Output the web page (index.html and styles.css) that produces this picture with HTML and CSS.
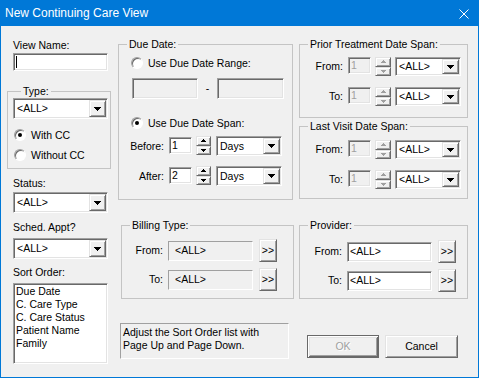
FILE: index.html
```html
<!DOCTYPE html>
<html lang="en">
<head>
    <meta charset="UTF-8">
    <title>New Continuing Care View</title>
    <link rel="stylesheet" href="styles.css">
</head>
<body>
<div class="window">
    <div class="titlebar">
        <span class="title">New Continuing Care View</span>
        <svg class="close" width="10" height="10" viewBox="0 0 10 10"><path d="M0.5 0.5L9.5 9.5M9.5 0.5L0.5 9.5" stroke="#fff" stroke-width="1"/></svg>
    </div>

    <div class="client">
        <!-- left column -->
        <div class="col col-left">
            <div class="label lbl-view">View Name:</div>
            <div class="sunken edit view-name"><span class="caret"></span></div>

            <fieldset class="group group-type">
                <legend>Type:</legend>
                <div class="sunken combo combo-wide">
                    <span class="combo-text">&lt;ALL&gt;</span>
                    <span class="raised drop"><svg width="7" height="4"><path d="M0 0h7v1H0zM1 1h5v1H1zM2 2h3v1H2zM3 3h1v1H3z"/></svg></span>
                </div>
                <div class="radio-row first"><span class="radio checked"></span>With CC</div>
                <div class="radio-row"><span class="radio"></span>Without CC</div>
            </fieldset>

            <div class="label lbl-status">Status:</div>
            <div class="sunken combo combo-wide combo-status">
                <span class="combo-text">&lt;ALL&gt;</span>
                <span class="raised drop"><svg width="7" height="4"><path d="M0 0h7v1H0zM1 1h5v1H1zM2 2h3v1H2zM3 3h1v1H3z"/></svg></span>
            </div>

            <div class="label lbl-sched">Sched. Appt?</div>
            <div class="sunken combo combo-wide combo-sched">
                <span class="combo-text">&lt;ALL&gt;</span>
                <span class="raised drop"><svg width="7" height="4"><path d="M0 0h7v1H0zM1 1h5v1H1zM2 2h3v1H2zM3 3h1v1H3z"/></svg></span>
            </div>

            <div class="label lbl-sort">Sort Order:</div>
            <div class="sunken listbox">
                <div>Due Date</div>
                <div>C. Care Type</div>
                <div>C. Care Status</div>
                <div>Patient Name</div>
                <div>Family</div>
            </div>
        </div>

        <!-- middle column -->
        <div class="col col-mid">
            <fieldset class="group group-due">
                <legend>Due Date:</legend>
                <div class="radio-row range-radio"><span class="radio"></span>Use Due Date Range:</div>
                <div class="range-row">
                    <div class="sunken edit disabled range-box"></div>
                    <span class="dash">-</span>
                    <div class="sunken edit disabled range-box second"></div>
                </div>
                <div class="radio-row span-radio"><span class="radio checked"></span>Use Due Date Span:</div>
                <div class="span-row before">
                    <span class="row-label">Before:</span>
                    <div class="sunken edit num">1</div>
                    <div class="spin">
                        <span class="raised spin-btn"><svg width="5" height="3"><path d="M2 0h1v1H2zM1 1h3v1H1zM0 2h5v1H0z"/></svg></span>
                        <span class="raised spin-btn"><svg width="5" height="3"><path d="M0 0h5v1H0zM1 1h3v1H1zM2 2h1v1H2z"/></svg></span>
                    </div>
                    <div class="sunken combo combo-days">
                        <span class="combo-text">Days</span>
                        <span class="raised drop"><svg width="7" height="4"><path d="M0 0h7v1H0zM1 1h5v1H1zM2 2h3v1H2zM3 3h1v1H3z"/></svg></span>
                    </div>
                </div>
                <div class="span-row after">
                    <span class="row-label">After:</span>
                    <div class="sunken edit num">2</div>
                    <div class="spin">
                        <span class="raised spin-btn"><svg width="5" height="3"><path d="M2 0h1v1H2zM1 1h3v1H1zM0 2h5v1H0z"/></svg></span>
                        <span class="raised spin-btn"><svg width="5" height="3"><path d="M0 0h5v1H0zM1 1h3v1H1zM2 2h1v1H2z"/></svg></span>
                    </div>
                    <div class="sunken combo combo-days">
                        <span class="combo-text">Days</span>
                        <span class="raised drop"><svg width="7" height="4"><path d="M0 0h7v1H0zM1 1h5v1H1zM2 2h3v1H2zM3 3h1v1H3z"/></svg></span>
                    </div>
                </div>
            </fieldset>

            <fieldset class="group group-billing">
                <legend>Billing Type:</legend>
                <div class="pick-row first">
                    <span class="row-label">From:</span>
                    <div class="static-box">&lt;ALL&gt;</div>
                    <div class="raised more">&gt;&gt;</div>
                </div>
                <div class="pick-row">
                    <span class="row-label">To:</span>
                    <div class="static-box">&lt;ALL&gt;</div>
                    <div class="raised more">&gt;&gt;</div>
                </div>
            </fieldset>

            <div class="note">Adjust the Sort Order list with<br>Page Up and Page Down.</div>
        </div>

        <!-- right column -->
        <div class="col col-right">
            <fieldset class="group group-prior">
                <legend>Prior Treatment Date Span:</legend>
                <div class="span-row first">
                    <span class="row-label">From:</span>
                    <div class="sunken edit num disabled">1</div>
                    <div class="spin off">
                        <span class="raised spin-btn"><svg width="5" height="3"><path d="M2 0h1v1H2zM1 1h3v1H1zM0 2h5v1H0z"/></svg></span>
                        <span class="raised spin-btn"><svg width="5" height="3"><path d="M0 0h5v1H0zM1 1h3v1H1zM2 2h1v1H2z"/></svg></span>
                    </div>
                    <div class="sunken combo combo-days">
                        <span class="combo-text">&lt;ALL&gt;</span>
                        <span class="raised drop"><svg width="7" height="4"><path d="M0 0h7v1H0zM1 1h5v1H1zM2 2h3v1H2zM3 3h1v1H3z"/></svg></span>
                    </div>
                </div>
                <div class="span-row second">
                    <span class="row-label">To:</span>
                    <div class="sunken edit num disabled">1</div>
                    <div class="spin off">
                        <span class="raised spin-btn"><svg width="5" height="3"><path d="M2 0h1v1H2zM1 1h3v1H1zM0 2h5v1H0z"/></svg></span>
                        <span class="raised spin-btn"><svg width="5" height="3"><path d="M0 0h5v1H0zM1 1h3v1H1zM2 2h1v1H2z"/></svg></span>
                    </div>
                    <div class="sunken combo combo-days">
                        <span class="combo-text">&lt;ALL&gt;</span>
                        <span class="raised drop"><svg width="7" height="4"><path d="M0 0h7v1H0zM1 1h5v1H1zM2 2h3v1H2zM3 3h1v1H3z"/></svg></span>
                    </div>
                </div>
            </fieldset>

            <fieldset class="group group-visit">
                <legend>Last Visit Date Span:</legend>
                <div class="span-row first">
                    <span class="row-label">From:</span>
                    <div class="sunken edit num disabled">1</div>
                    <div class="spin off">
                        <span class="raised spin-btn"><svg width="5" height="3"><path d="M2 0h1v1H2zM1 1h3v1H1zM0 2h5v1H0z"/></svg></span>
                        <span class="raised spin-btn"><svg width="5" height="3"><path d="M0 0h5v1H0zM1 1h3v1H1zM2 2h1v1H2z"/></svg></span>
                    </div>
                    <div class="sunken combo combo-days">
                        <span class="combo-text">&lt;ALL&gt;</span>
                        <span class="raised drop"><svg width="7" height="4"><path d="M0 0h7v1H0zM1 1h5v1H1zM2 2h3v1H2zM3 3h1v1H3z"/></svg></span>
                    </div>
                </div>
                <div class="span-row second">
                    <span class="row-label">To:</span>
                    <div class="sunken edit num disabled">1</div>
                    <div class="spin off">
                        <span class="raised spin-btn"><svg width="5" height="3"><path d="M2 0h1v1H2zM1 1h3v1H1zM0 2h5v1H0z"/></svg></span>
                        <span class="raised spin-btn"><svg width="5" height="3"><path d="M0 0h5v1H0zM1 1h3v1H1zM2 2h1v1H2z"/></svg></span>
                    </div>
                    <div class="sunken combo combo-days">
                        <span class="combo-text">&lt;ALL&gt;</span>
                        <span class="raised drop"><svg width="7" height="4"><path d="M0 0h7v1H0zM1 1h5v1H1zM2 2h3v1H2zM3 3h1v1H3z"/></svg></span>
                    </div>
                </div>
            </fieldset>

            <fieldset class="group group-provider">
                <legend>Provider:</legend>
                <div class="pick-row first">
                    <span class="row-label">From:</span>
                    <div class="sunken edit pick-edit">&lt;ALL&gt;</div>
                    <div class="raised more">&gt;&gt;</div>
                </div>
                <div class="pick-row">
                    <span class="row-label">To:</span>
                    <div class="sunken edit pick-edit">&lt;ALL&gt;</div>
                    <div class="raised more">&gt;&gt;</div>
                </div>
            </fieldset>

            <div class="buttons">
                <div class="raised button default disabled">OK</div>
                <div class="raised button">Cancel</div>
            </div>
        </div>
    </div>
</div>
</body>
</html>
```

FILE: styles.css
```css
body {
    margin: 0;
    font-family: "Liberation Sans", Arial, sans-serif;
    font-size: 10.5px;
    line-height: 13px;
    color: #000;
}
.window {
    width: 479px;
    height: 378px;
    box-sizing: border-box;
    border: 1px solid #0078d7;
    background: #f0f0f0;
    display: flex;
    flex-direction: column;
}
.titlebar {
    flex: none;
    height: 25px;
    background: #0078d7;
    color: #fff;
    font-size: 12px;
    display: flex;
    align-items: center;
    justify-content: space-between;
    padding: 0 9px 0 4px;
}
.client {
    flex: 1;
    display: flex;
    padding-left: 6px;
}
.col {
    display: flex;
    flex-direction: column;
    align-items: flex-start;
}
.col-left { width: 104px; }
.col-mid { width: 176px; margin-left: 7px; }
.col-right { width: 169px; margin-left: 5px; }

/* 3d borders */
.sunken {
    box-sizing: border-box;
    background: #fff;
    border: 1px solid;
    border-color: #a0a0a0 #fff #fff #a0a0a0;
    box-shadow: inset 1px 1px 0 #696969, inset -1px -1px 0 #e3e3e3;
    padding: 1px;
}
.raised {
    box-sizing: border-box;
    background: #f0f0f0;
    border: 1px solid;
    border-color: #e3e3e3 #696969 #696969 #e3e3e3;
    box-shadow: inset 1px 1px 0 #fff, inset -1px -1px 0 #a0a0a0;
}

/* left column */
.label { margin-left: 6px; }
.lbl-view { margin-top: 13px; }
.view-name {
    margin: 1px 0 0 6px;
    width: 95px;
    height: 18px;
    padding-left: 2px;
}
.caret {
    display: block;
    width: 1px;
    height: 12px;
    margin-top: 1px;
    background: #000;
}
.lbl-status { margin-top: 8px; }
.combo-status { margin: 2px 0 0 6px; }
.lbl-sched { margin-top: 8px; }
.combo-sched { margin: 4px 0 0 6px; }
.lbl-sort { margin-top: 7px; }
.listbox {
    margin: 4px 0 0 6px;
    width: 95px;
    height: 81px;
    padding: 1px 2px;
}

/* group boxes */
.group {
    margin: 0;
    padding: 0;
    min-width: 0;
    box-sizing: border-box;
    border: 1px solid #c4c4c4;
}
.group legend {
    padding: 0 2px;
    margin-left: 8px;
    line-height: 13px;
}
.group-type {
    margin-top: 14px;
    width: 104px;
    padding: 0 0 5px 5px;
}

/* combo box */
.combo {
    display: flex;
    height: 20px;
}
.combo-wide { width: 95px; height: 21px; }
.combo-text {
    flex: 1;
    padding-left: 2px;
    display: flex;
    align-items: center;
}
.drop {
    width: 17px;
    display: flex;
    align-items: center;
    justify-content: center;
}
.drop svg { fill: #000; }

/* radio */
.radio-row {
    display: flex;
    align-items: center;
    height: 16px;
    margin-top: 4px;
}
.radio-row.first { margin-top: 8px; }
.group-type .radio-row { margin-left: 1px; }
.radio {
    flex: none;
    width: 12px;
    height: 12px;
    box-sizing: border-box;
    border-radius: 50%;
    background: #fff;
    border: 1px solid;
    border-color: #a0a0a0 #fff #fff #a0a0a0;
    box-shadow: inset 1px 1px 0 #696969;
    margin-right: 5px;
    display: flex;
    align-items: center;
    justify-content: center;
}
.radio.checked::after {
    content: "";
    width: 4px;
    height: 4px;
    border-radius: 50%;
    background: #000;
}

/* due date */
.group-due {
    margin-top: 12px;
    width: 175px;
    padding-bottom: 13px;
}
.range-radio { margin: 4px 0 0 12px; }
.range-row {
    display: flex;
    align-items: center;
    margin: 7px 0 0 13px;
}
.edit.disabled { background: #f0f0f0; color: #a0a0a0; }
.range-box { width: 66px; height: 21px; }
.range-box.second { width: 67px; }
.dash { width: 19px; text-align: center; }
.span-radio { margin: 16px 0 0 12px; }

.span-row {
    display: flex;
    align-items: flex-start;
    height: 20px;
}
.span-row.before { margin-top: 5px; }
.span-row.after { margin-top: 10px; }
.row-label {
    align-self: center;
    text-align: right;
    width: 45px;
    margin-right: 5px;
}
.num {
    width: 23px;
    height: 17px;
    margin-top: 1px;
    padding: 1px 2px;
}
.spin {
    display: flex;
    flex-direction: column;
    width: 15px;
    height: 19px;
    margin-left: 4px;
}
.spin-btn {
    flex: 1;
    display: flex;
    align-items: center;
    justify-content: center;
}
.spin svg { fill: #000; }
.spin.off svg { fill: #a0a0a0; }
.combo-days {
    width: 66px;
    margin-left: 5px;
}

/* billing / provider */
.group-billing {
    margin: 19px 0 0 3px;
    width: 173px;
    padding-bottom: 7px;
}
.pick-row {
    display: flex;
    align-items: center;
    height: 23px;
    margin-top: 6px;
}
.pick-row.first { margin-top: 7px; }
.group-billing .row-label { width: 41px; }
.static-box {
    box-sizing: border-box;
    width: 85px;
    height: 20px;
    border: 1px solid;
    border-color: #a0a0a0 #fff #fff #a0a0a0;
    padding-left: 6px;
    display: flex;
    align-items: center;
}
.more {
    width: 18px;
    height: 23px;
    margin-left: 6px;
    display: flex;
    align-items: center;
    justify-content: center;
}
.note {
    margin: 24px 0 0 2px;
    box-sizing: border-box;
    width: 169px;
    height: 36px;
    border: 1px solid;
    border-color: #a0a0a0 #fff #fff #a0a0a0;
    padding: 2px 2px;
}

/* right column */
.group-prior,
.group-visit,
.group-provider {
    width: 169px;
}
.group-prior { margin-top: 12px; padding-bottom: 11px; }
.group-visit { margin-top: 2px; padding-bottom: 9px; }
.group-prior .span-row,
.group-visit .span-row { height: 19px; }
.group-prior .span-row.first { margin-top: 6px; }
.group-visit .span-row.first { margin-top: 7px; }
.group-prior .span-row.second,
.group-visit .span-row.second { margin-top: 11px; }
.group-prior .row-label,
.group-visit .row-label { width: 43px; }
.group-prior .combo,
.group-visit .combo { height: 19px; margin-left: 4px; }
.group-prior .spin,
.group-visit .spin { width: 16px; }
.num.disabled { margin-top: 0; }

.group-provider { margin-top: 20px; padding-bottom: 6px; }
.group-provider .pick-row.first { margin-top: 8px; }
.group-provider .row-label { width: 42px; }
.pick-edit {
    width: 85px;
    height: 20px;
    padding: 1px 2px;
    display: flex;
    align-items: center;
}

.buttons {
    display: flex;
    margin: 36px 0 0 8px;
}
.button {
    width: 72px;
    height: 23px;
    display: flex;
    align-items: center;
    justify-content: center;
}
.button + .button { margin-left: 6px; width: 73px; }
.button.default {
    border-color: #696969;
    box-shadow: inset 1px 1px 0 #fff, inset -1px -1px 0 #696969, inset 2px 2px 0 #e3e3e3, inset -2px -2px 0 #a0a0a0;
}
.button.disabled {
    color: #a0a0a0;
    text-shadow: 1px 1px 0 #fff;
}
```
